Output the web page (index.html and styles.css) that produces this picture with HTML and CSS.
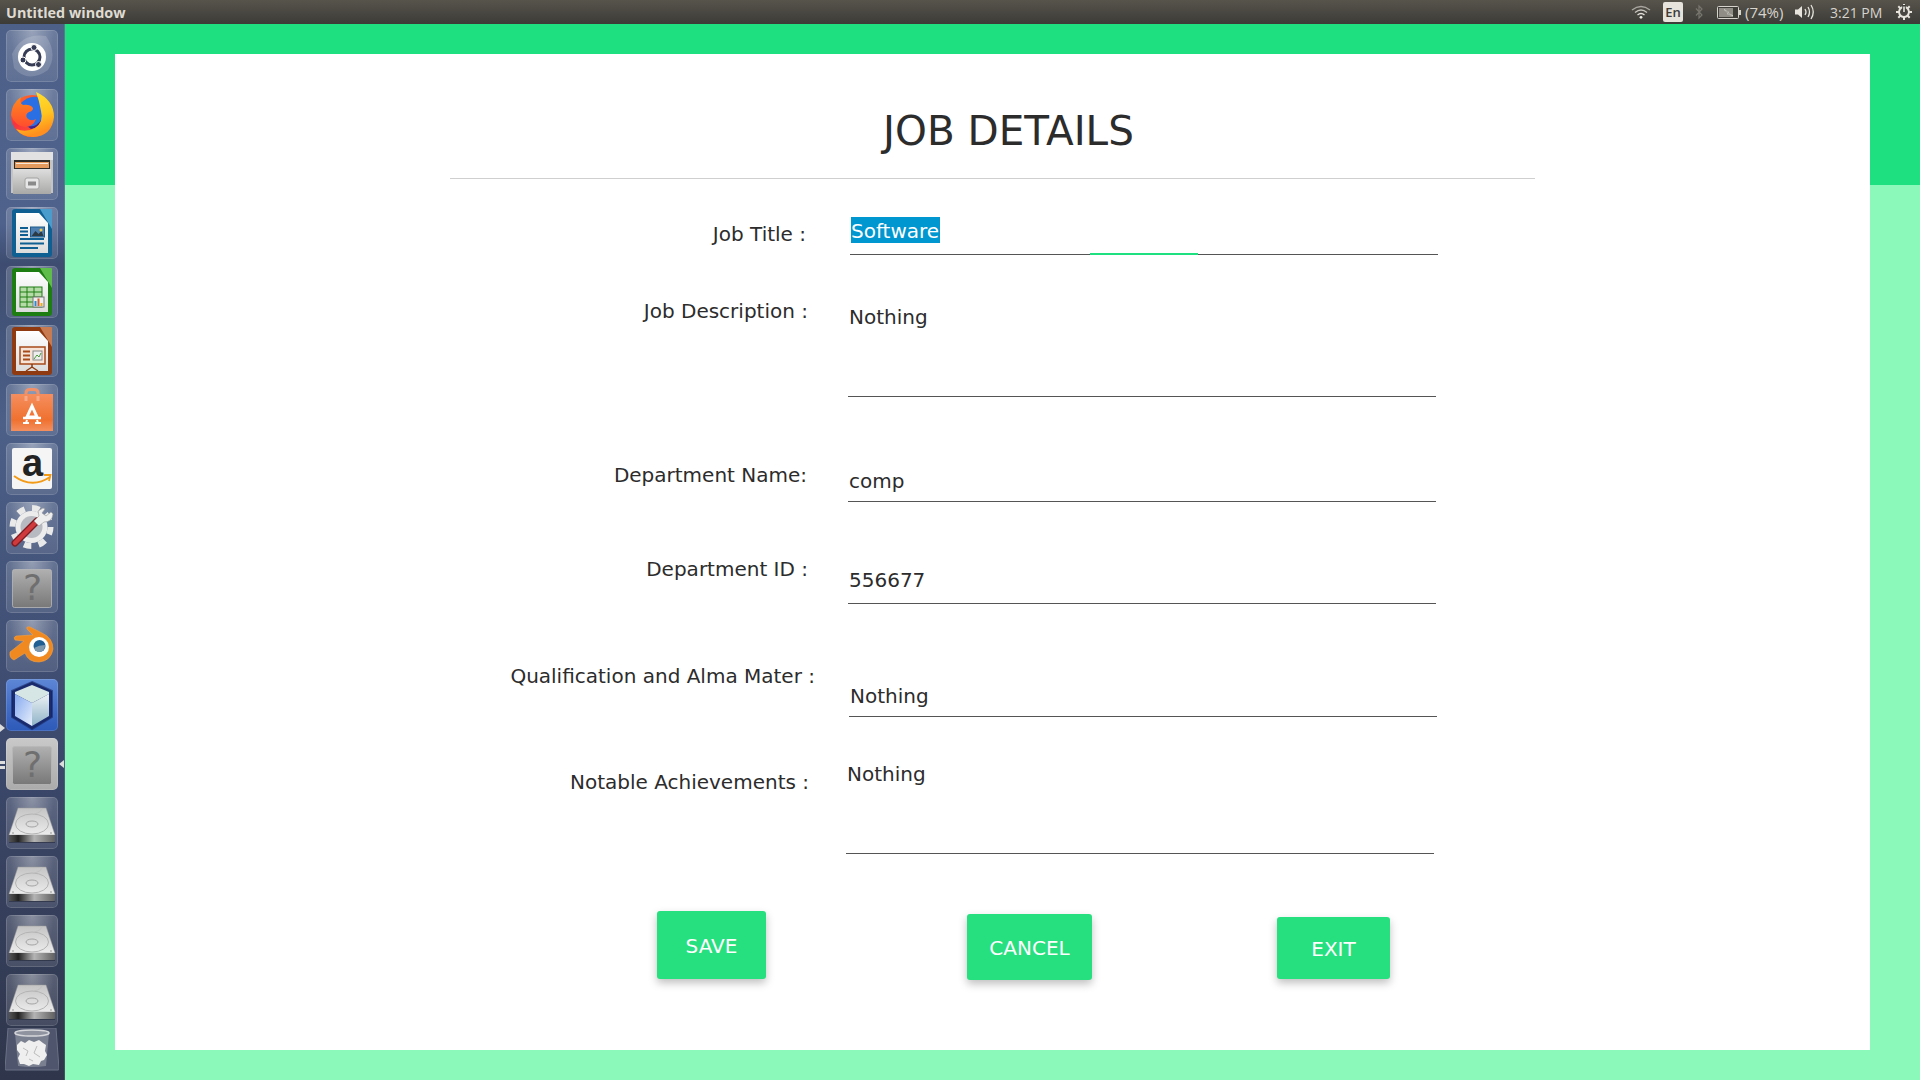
FILE: index.html
```html
<!DOCTYPE html>
<html lang="en">
<head>
<meta charset="utf-8">
<title>Untitled window</title>
<link rel="stylesheet" href="styles.css">
</head>
<body>
<svg class="defs" width="0" height="0" aria-hidden="true">
  <defs>
    <linearGradient id="gFile" x1="0" y1="0" x2="0" y2="1"><stop offset="0" stop-color="#fff"/><stop offset="1" stop-color="#dcdcdc"/></linearGradient>
    <linearGradient id="gFox" x1="0" y1="0" x2="0.3" y2="1"><stop offset="0" stop-color="#ffe733"/><stop offset=".65" stop-color="#ffc41f"/><stop offset="1" stop-color="#ff8f1e"/></linearGradient>
    <linearGradient id="gFoxR" x1="0" y1="0" x2=".6" y2="1"><stop offset="0" stop-color="#ff7a1e"/><stop offset=".55" stop-color="#f8313f"/><stop offset="1" stop-color="#ff5a30"/></linearGradient>
    <linearGradient id="gFoxHead" x1="0" y1="0" x2="0" y2="1"><stop offset="0" stop-color="#ff8a1e"/><stop offset="1" stop-color="#ff4d2e"/></linearGradient>
    <linearGradient id="gBag" x1="0" y1="0" x2="0" y2="1"><stop offset="0" stop-color="#f58e5e"/><stop offset=".7" stop-color="#ef7130"/><stop offset="1" stop-color="#f4905f"/></linearGradient>
    <linearGradient id="gDrawer" x1="0" y1="0" x2="0" y2="1"><stop offset="0" stop-color="#dedede"/><stop offset="1" stop-color="#a9a9a7"/></linearGradient>
    <linearGradient id="gQ" x1="0" y1="0" x2="0" y2="1"><stop offset="0" stop-color="#b0b0b0"/><stop offset="1" stop-color="#787878"/></linearGradient>
    <linearGradient id="gDisk" x1="0" y1="0" x2="0" y2="1"><stop offset="0" stop-color="#c4c4c4"/><stop offset="1" stop-color="#ececec"/></linearGradient>
    <linearGradient id="gDiskFront" x1="0" y1="0" x2="1" y2="0"><stop offset="0" stop-color="#555"/><stop offset=".12" stop-color="#3a3a3a"/><stop offset=".2" stop-color="#222"/><stop offset=".55" stop-color="#b4b4b4"/><stop offset="1" stop-color="#606060"/></linearGradient>
    <linearGradient id="gCubeL" x1="0" y1="0" x2="1" y2="1"><stop offset="0" stop-color="#86a9ee"/><stop offset="1" stop-color="#e6effc"/></linearGradient>
    <linearGradient id="gCubeR" x1="0" y1="0" x2="0" y2="1"><stop offset="0" stop-color="#edf2f4"/><stop offset="1" stop-color="#8eb2c8"/></linearGradient>
    <symbol id="disk" viewBox="0 0 52 52">
      <path d="M12 11H40L49 38H3Z" fill="url(#gDisk)" stroke="#9a9a9a" stroke-width=".5"/>
      <path d="M3 38H49V44Q49 45 48 45H4Q3 45 3 44Z" fill="url(#gDiskFront)"/>
      <ellipse cx="26" cy="27" rx="16.500" ry="10" fill="none" stroke="#b4b4b4"/>
      <ellipse cx="26" cy="27" rx="6" ry="3" fill="none" stroke="#a4a4a4"/>
      <path d="M28 17Q37 15 35 11" fill="none" stroke="#c0c0c0"/>
      <circle cx="7" cy="36" r=".7" fill="#777"/><circle cx="45" cy="36" r=".7" fill="#777"/>
      <path d="M3 45.500H49" stroke="#1c2030" stroke-opacity=".5"/>
    </symbol>
    <symbol id="help" viewBox="0 0 52 52">
      <rect x="6.500" y="8.500" width="39" height="38" rx="2" fill="url(#gQ)" stroke="#b8b8b8" stroke-opacity=".8"/>
      <text class="help-mark" x="26.500" y="39" text-anchor="middle">?</text>
    </symbol>
  </defs>
</svg>

<header class="topbar">
  <span class="window-title">Untitled window</span>
  <div class="indicators">
    <svg class="ind-wifi" width="20" height="14" viewBox="0 0 20 14"><path d="M1 5Q10 -2 19 5" fill="none" stroke="#a9a7a0" stroke-width="1.300"/><path d="M4 7.500Q10 2.500 16 7.500" fill="none" stroke="#c8c6bf" stroke-width="1.300"/><path d="M6.500 10Q10 7 13.500 10" fill="none" stroke="#e2e0d9" stroke-width="1.300"/><circle cx="10" cy="12.300" r="1.400" fill="#eeece5"/></svg>
    <span class="ind-lang">En</span>
    <svg class="ind-bt" width="8" height="16" viewBox="0 0 8 16"><path d="M1 4.500L7 11L4 14V2L7 5L1 11.500" fill="none" stroke="#77756e" stroke-width="1.200"/></svg>
    <svg class="ind-bat" width="24" height="13" viewBox="0 0 24 13"><rect x=".5" y=".5" width="21" height="12" rx="1" fill="#3f3e39" stroke="#d5d3cc"/><rect x="2" y="2" width="14" height="9" fill="#8f8d86"/><rect x="22" y="4" width="2" height="5" fill="#d5d3cc"/><path d="M7 3.500L12 6.300L11 7L16 9.800L10 7.800L11 7L7 3.500Z" fill="#3a3934" stroke="#eeece5" stroke-width=".5"/></svg>
    <span class="ind-text ind-pct">(74%)</span>
    <svg class="ind-vol" width="21" height="16" viewBox="0 0 21 16"><path d="M1 5.500H4L8 2V14L4 10.500H1Z" fill="#e6e4dd"/><path d="M11 5Q13 8 11 11" fill="none" stroke="#e6e4dd" stroke-width="1.300"/><path d="M14 3Q17 8 14 13" fill="none" stroke="#e6e4dd" stroke-width="1.300"/><path d="M17 1Q21.500 8 17 15" fill="none" stroke="#e6e4dd" stroke-width="1.300"/></svg>
    <span class="ind-text ind-clock">3:21 PM</span>
    <svg class="ind-gear" width="16" height="16" viewBox="0 0 16 16"><path d="M8 3A5 5 0 1 1 7.990 3Z" fill="none" stroke="#e6e4dd" stroke-width="2"/><path d="M8 0V3M8 13V16M0 8H3M13 8H16M2.300 2.300L4.400 4.400M11.600 11.600L13.700 13.700M2.300 13.700L4.400 11.600M11.600 4.400L13.700 2.300" stroke="#e6e4dd" stroke-width="2"/><path d="M8 1V8" stroke="#3f3e39" stroke-width="3.500"/><path d="M8 2.500V8" stroke="#e6e4dd" stroke-width="1.600"/></svg>
  </div>
</header>

<div class="desktop">
  <nav class="launcher">
    <div class="tile">
      <svg viewBox="0 0 52 52"><path d="M6 24Q16 2 40 6Q52 24 42 40Q22 54 8 38Z" fill="#fff" fill-opacity=".16"/><circle cx="26" cy="27" r="14" fill="#fff"/><circle cx="26" cy="27" r="8" fill="none" stroke="#363c55" stroke-width="3"/><circle cx="28" cy="17.500" r="3" fill="#363c55" stroke="#fff"/><circle cx="17" cy="30" r="3" fill="#363c55" stroke="#fff"/><circle cx="32.500" cy="34.500" r="3" fill="#363c55" stroke="#fff"/></svg>
    </div>
    <div class="tile">
      <svg viewBox="0 0 52 52"><circle cx="26" cy="27" r="21" fill="url(#gFoxR)"/><path d="M14 15Q24 5 34 9Q41 22 36 31Q30 39 20 37Z" fill="#2b6fe4"/><path d="M21 37Q30 39 36 30Q33 39 25 40Z" fill="#3a2795"/><path d="M5 26Q6 14 15 8Q13 14 17 16Q24 15 27 19Q27 22 23 23Q19 25 21 29Q25 33 30 30Q27 38 19 38Q9 37 5 26Z" fill="url(#gFoxHead)"/><path d="M30 3Q48 11 48 28Q46 47 27 48Q16 48 10 40Q20 44 29 39Q38 33 35 22Q33 11 30 3Z" fill="url(#gFox)"/></svg>
    </div>
    <div class="tile">
      <svg viewBox="0 0 52 52"><path d="M5 5Q5 4 6 4H46Q47 4 47 5V45H5Z" fill="#c4c4c4"/><path d="M5 4H47V12H5Z" fill="#e2e2e2"/><path d="M8 12H44V22H8Z" fill="#2f2c28"/><path d="M9 14H43V20H9Z" fill="#e39a5c"/><path d="M10 15.500H42" stroke="#fff" stroke-opacity=".75"/><path d="M7 21H45V46H7Z" fill="url(#gDrawer)"/><rect x="19" y="30" width="14" height="11" rx="2" fill="#e6e6e6" stroke="#a2a2a2"/><rect x="22" y="33.500" width="8" height="4" fill="#8a8a8a"/></svg>
    </div>
    <div class="tile">
      <svg viewBox="0 0 52 52"><path d="M6 5Q6 2 9 2H36L46 12V47Q46 50 43 50H9Q6 50 6 47Z" fill="#0f5f93"/><path d="M34 2H45Q46 2 46 3V22Z" fill="#4a9ccd"/><path d="M10 6H33L42 16V46H10Z" fill="url(#gFile)"/><rect x="24.500" y="20" width="14" height="10" fill="#4e7fb0" stroke="#1c5c8c"/><path d="M25.500 29L29.500 24L32.500 27L35.500 24L37.500 29Z" fill="#2c3a44"/><circle cx="35" cy="23" r="1.500" fill="#f2c84b"/><path d="M14 21H22M14 24.500H22M14 28H22M14 32H38M14 36.500H38M14 41H32" stroke="#0f5f93" stroke-width="2"/></svg>
    </div>
    <div class="tile">
      <svg viewBox="0 0 52 52"><path d="M6 5Q6 2 9 2H36L46 12V47Q46 50 43 50H9Q6 50 6 47Z" fill="#1e7d12"/><path d="M34 2H45Q46 2 46 3V22Z" fill="#5fbb4a"/><path d="M10 6H33L42 16V46H10Z" fill="url(#gFile)"/><rect x="14" y="21" width="22" height="20" fill="#b5dca8" stroke="#1e7d12"/><path d="M14 26H36M14 31H36M14 36H36M21 21V41M28 21V41" stroke="#1e7d12"/><rect x="27" y="31" width="11" height="10" fill="#eee" stroke="#777"/><rect x="28.500" y="35" width="2" height="5" fill="#2a8ad0"/><rect x="31.500" y="32.500" width="2" height="7.500" fill="#dd5a2a"/><rect x="34.500" y="37" width="2" height="3" fill="#e8b020"/></svg>
    </div>
    <div class="tile">
      <svg viewBox="0 0 52 52"><path d="M6 5Q6 2 9 2H36L46 12V47Q46 50 43 50H9Q6 50 6 47Z" fill="#8f3a10"/><path d="M34 2H45Q46 2 46 3V22Z" fill="#c87a50"/><path d="M10 6H33L42 16V46H10Z" fill="url(#gFile)"/><rect x="14" y="22" width="25" height="17" fill="#f6e4d8" stroke="#a84a1a" stroke-width="1.500"/><path d="M17 26.500H24M17 30.500H24M17 34.500H24" stroke="#a84a1a" stroke-width="2"/><rect x="27" y="26" width="9" height="9" fill="#eee" stroke="#888"/><path d="M28 34L31 30L33 32L35 28" fill="none" stroke="#4a9a3a"/><path d="M26 39V43M26 42L20 46M26 42L32 46" stroke="#8f3a10" stroke-width="1.500"/></svg>
    </div>
    <div class="tile">
      <svg viewBox="0 0 52 52"><path d="M20 17V9Q20 5.500 24 5.500H28Q32 5.500 32 9V17" fill="none" stroke="#f0916a" stroke-width="3"/><path d="M5 10H47V47H5Z" fill="url(#gBag)"/><path d="M20 17V12M32 17V12" stroke="#f7a988" stroke-width="3"/><path d="M26 22L31 33H21Z" fill="none" stroke="#fff" stroke-width="3"/><path d="M17 34H35" stroke="#fff" stroke-width="2.500"/><path d="M20 39L21 36M32 39L31 36M17 39H23M29 39H35" stroke="#fff" stroke-width="2"/></svg>
    </div>
    <div class="tile">
      <svg viewBox="0 0 52 52"><rect x="6" y="5" width="40" height="41" rx="2" fill="#f5f5f5"/><text class="amazon-mark" x="26.500" y="33" text-anchor="middle">a</text><path d="M8 33Q26 46 44 34" fill="none" stroke="#f39a16" stroke-width="2"/><path d="M38 32L44.500 32L43 38" fill="none" stroke="#f39a16" stroke-width="1.800"/></svg>
    </div>
    <div class="tile">
      <svg viewBox="0 0 52 52"><circle cx="25.500" cy="25" r="19" fill="none" stroke="#e9e9e9" stroke-width="6" stroke-dasharray="7.500 7.420"/><circle cx="25.500" cy="25" r="16" fill="#ececec"/><circle cx="25.500" cy="25" r="11" fill="#b7bac1"/><path d="M9 41L31 19" stroke="#7e1a20" stroke-width="7" stroke-linecap="round"/><path d="M9 41L31 19" stroke="#cf3a3c" stroke-width="4.500" stroke-linecap="round"/><path d="M28 19L33 14L32 9L37 6L39 7L36 11L40 14L45 10L47 12Q46 20 38 20L33 24Z" fill="#eee" stroke="#999" stroke-width=".6"/></svg>
    </div>
    <div class="tile">
      <svg viewBox="0 0 52 52"><use href="#help"/></svg>
    </div>
    <div class="tile">
      <svg viewBox="0 0 52 52"><path d="M4 32L18 21L9 20Q7 17 10 16L27 15L21 9Q20 6 24 7L36 13Q47 18 47 29Q45 41 33 42Q22 42 19 33L8 40Q3 38 4 32Z" fill="#f08a20" stroke="#f5a040" stroke-width=".6"/><circle cx="33" cy="27" r="10" fill="#fff"/><circle cx="33.500" cy="26" r="6" fill="#1f5f92"/><path d="M28 28Q33 25 39 25Q39 32 33 32Q30 32 28 28Z" fill="#7e99ae"/></svg>
    </div>
    <div class="tile tile-active">
      <svg viewBox="0 0 52 52"><path d="M26 3L46 12V38L26 50L6 38V12Z" fill="#1b2c72" stroke="#16245f" stroke-opacity=".6" stroke-width="2"/><path d="M26 6L43 13V15L26 24L9 15V13Z" fill="#d6e6e4"/><path d="M9 15L26 24V47L9 37Z" fill="url(#gCubeL)"/><path d="M43 15L26 24V47L43 37Z" fill="url(#gCubeR)"/></svg>
    </div>
    <div class="tile tile-focus">
      <svg viewBox="0 0 52 52"><use href="#help"/></svg>
    </div>
    <div class="tile"><svg viewBox="0 0 52 52"><use href="#disk"/></svg></div>
    <div class="tile"><svg viewBox="0 0 52 52"><use href="#disk"/></svg></div>
    <div class="tile"><svg viewBox="0 0 52 52"><use href="#disk"/></svg></div>
    <div class="tile"><svg viewBox="0 0 52 52"><use href="#disk"/></svg></div>
    <div class="trash">
      <svg viewBox="0 0 54 43"><path d="M3 0H51L54 41Q54 42 53 42H1Q0 42 0 41Z" fill="#4e556c" stroke="#6b7286"/><path d="M10 5H44L41 38Q27 40 13 38Z" fill="#7b8090"/><ellipse cx="27" cy="5" rx="17" ry="3" fill="#8f93a0" stroke="#d6d7da" stroke-width="1.500"/><path d="M12 17L16 13L20 15L24 12L29 14L34 12L38 15L41 17L40 23L42 27L39 32L36 33L34 37L28 36L24 38L19 36L15 36L13 30L15 26L12 22Z" fill="#efefef"/><path d="M18 20L23 23L21 28M32 18L29 25L35 29M24 31L28 33" fill="none" stroke="#bdbdbd"/></svg>
    </div>
    <span class="pip pip-running"></span>
    <span class="pip pip-focus-l"></span>
    <span class="pip pip-focus-l2"></span>
    <span class="pip pip-focus-r"></span>
  </nav>

  <main class="stage">
    <section class="card">
      <h1 class="title">JOB DETAILS</h1>
      <form class="form">
        <div class="row row-job">
          <label class="label">Job Title :</label>
          <div class="field"><span class="selected">Software</span><i class="focus-line"></i></div>
        </div>
        <div class="row row-desc">
          <label class="label">Job Description :</label>
          <div class="field">Nothing</div>
        </div>
        <div class="row row-dept">
          <label class="label">Department Name:</label>
          <div class="field">comp</div>
        </div>
        <div class="row row-id">
          <label class="label">Department ID :</label>
          <div class="field">556677</div>
        </div>
        <div class="row row-qual">
          <label class="label">Qualification and Alma Mater :</label>
          <div class="field">Nothing</div>
        </div>
        <div class="row row-notable">
          <label class="label">Notable Achievements :</label>
          <div class="field">Nothing</div>
        </div>
        <div class="actions">
          <button type="button" class="btn btn-save">SAVE</button>
          <button type="button" class="btn btn-cancel">CANCEL</button>
          <button type="button" class="btn btn-exit">EXIT</button>
        </div>
      </form>
    </section>
  </main>
</div>
</body>
</html>
```

FILE: styles.css
```css
* { box-sizing: border-box; }

html, body {
  margin: 0;
  height: 100%;
  overflow: hidden;
}

body {
  display: flex;
  flex-direction: column;
  width: 1920px;
  height: 1080px;
  font-family: "DejaVu Sans", sans-serif;
  color: #2c2c2c;
}

.defs { position: absolute; }

/* top panel */
.topbar {
  display: flex;
  align-items: center;
  justify-content: space-between;
  height: 24px;
  flex: none;
  padding-left: 6px;
  background: linear-gradient(#57544c, #3c3b37);
}

.window-title {
  font-family: "Open Sans", sans-serif;
  font-size: 14.4px;
  font-weight: 700;
  color: #dfdbd2;
}

.indicators {
  display: flex;
  align-items: center;
  height: 24px;
}

.ind-wifi { margin-right: 12px; }

.ind-lang {
  display: flex;
  align-items: center;
  justify-content: center;
  width: 20px;
  height: 20px;
  margin-right: 12px;
  border-radius: 2px;
  background: #e6e2dc;
  color: #3c3b37;
  font-family: "Open Sans", sans-serif;
  font-size: 13px;
  font-weight: 600;
}

.ind-bt { margin-right: 14px; }
.ind-bat { margin-right: 4px; }

.ind-text {
  font-family: "Open Sans", sans-serif;
  font-size: 14px;
  color: #d6d4cd;
}

.ind-pct { width: 38px; margin-right: 11px; font-size: 15px; white-space: nowrap; }
.ind-vol { margin-right: 15px; }
.ind-clock { width: 53px; margin-right: 13px; white-space: nowrap; }
.ind-gear { margin-right: 8px; }

/* launcher */
.desktop {
  display: flex;
  flex: 1;
  min-height: 0;
}

.launcher {
  position: relative;
  display: flex;
  flex-direction: column;
  align-items: center;
  gap: 7px;
  flex: none;
  width: 65px;
  padding: 6px 1px 0 0;
  background: linear-gradient(#4d6088 0, #4f628c 200px, #3d4c70 240px, #4c6088 400px, #3d4a6e 700px, #2f364b 1056px);
  box-shadow: inset -1px 0 0 rgba(255, 255, 255, .12);
}

.tile {
  width: 52px;
  height: 52px;
  flex: none;
  border-radius: 5px;
  background:
    radial-gradient(ellipse at 50% 0, rgba(255, 255, 255, .3), rgba(255, 255, 255, 0) 60%),
    linear-gradient(rgba(255, 255, 255, .18), rgba(255, 255, 255, .1));
  box-shadow: inset 0 0 0 1px rgba(255, 255, 255, .14);
}

.tile svg, .trash svg { display: block; width: 100%; height: 100%; }

.help-mark {
  font-family: "DejaVu Sans", sans-serif;
  font-size: 36px;
  fill: #6f6f6f;
}

.amazon-mark {
  font-family: "Liberation Sans", sans-serif;
  font-size: 38px;
  font-weight: 700;
  fill: #222;
}

.tile-active {
  background: linear-gradient(#5d86d6, #2d59b8);
}

.tile-focus {
  background: linear-gradient(#c9c9c9, #ababab);
}

.trash {
  width: 54px;
  height: 43px;
  flex: none;
  margin-top: -5px;
}

.pip {
  position: absolute;
  width: 0;
  height: 0;
  border-style: solid;
  border-color: transparent;
}

.pip-running { left: 0; top: 700px; border-width: 4px 0 4px 5px; border-left-color: #ddd; }
.pip-focus-l { left: 0; top: 737px; width: 5px; height: 3px; background: #ddd; border: 0; }
.pip-focus-l2 { left: 0; top: 742px; width: 5px; height: 3px; background: #ddd; border: 0; }
.pip-focus-r { right: 1px; top: 736px; border-width: 4px 5px 4px 0; border-right-color: #ddd; }

/* stage */
.stage {
  flex: 1;
  min-width: 0;
  padding: 30px 50px;
  background: linear-gradient(#1fe080 0, #1fe080 161px, #8af9ba 161px);
}

.card {
  height: 996px;
  background: #fff;
}

.title {
  margin: 0 0 0 335px;
  width: 1085px;
  height: 125px;
  padding: 54px 0 0 32px;
  border-bottom: 1px solid #cfcfcf;
  font-size: 40.5px;
  line-height: 46px;
  font-weight: 400;
  text-align: center;
  color: #2c2c2c;
}

.form {
  display: flex;
  flex-direction: column;
  margin-left: 335px;
  font-size: 20px;
  line-height: 26px;
}

.row {
  display: flex;
  align-items: flex-start;
}

.label {
  flex: none;
  line-height: 24px;
  text-align: right;
  white-space: nowrap;
}

.field {
  position: relative;
  flex: none;
  width: 588px;
  border-bottom: 1px solid #555;
  padding-left: 1px;
}

.selected {
  display: block;
  width: fit-content;
  margin-left: 1px;
  padding: 2px 1px 0 0;
  line-height: 24px;
  background: #0096cf;
  color: #fff;
}

.focus-line {
  position: absolute;
  left: 240px;
  bottom: -1px;
  width: 108px;
  height: 2px;
  background: #1fe080;
}

.row-job .label { width: 356px; padding-top: 43px; }
.row-job .field { margin-left: 44px; padding-top: 38px; padding-bottom: 11px; padding-left: 0; }

.row-desc .label { width: 358px; padding-top: 44px; }
.row-desc .field { margin-left: 40px; padding-top: 49px; padding-bottom: 66px; }

.row-dept .label { width: 357px; padding-top: 66px; }
.row-dept .field { margin-left: 41px; padding-top: 71px; padding-bottom: 7px; }

.row-id .label { width: 358px; padding-top: 55px; }
.row-id .field { margin-left: 40px; padding-top: 65px; padding-bottom: 10px; }

.row-qual .label { width: 365px; padding-top: 60px; }
.row-qual .field { margin-left: 34px; padding-top: 79px; padding-bottom: 7px; }

.row-notable .label { width: 359px; padding-top: 53px; }
.row-notable .field { margin-left: 37px; padding-top: 44px; padding-bottom: 66px; }

/* buttons */
.actions {
  display: flex;
  align-items: flex-start;
}

.btn {
  flex: none;
  padding: 2px 0 0;
  border: 0;
  border-radius: 3px;
  background: #26e07f;
  color: #fff;
  font-family: "DejaVu Sans", sans-serif;
  font-size: 20px;
  box-shadow: 0 4px 8px rgba(0, 0, 0, .25);
}

.btn-save { width: 109px; height: 68px; margin: 57px 0 0 207px; }
.btn-cancel { width: 125px; height: 66px; margin: 60px 0 0 201px; }
.btn-exit { width: 113px; height: 62px; margin: 63px 0 0 185px; }
```
